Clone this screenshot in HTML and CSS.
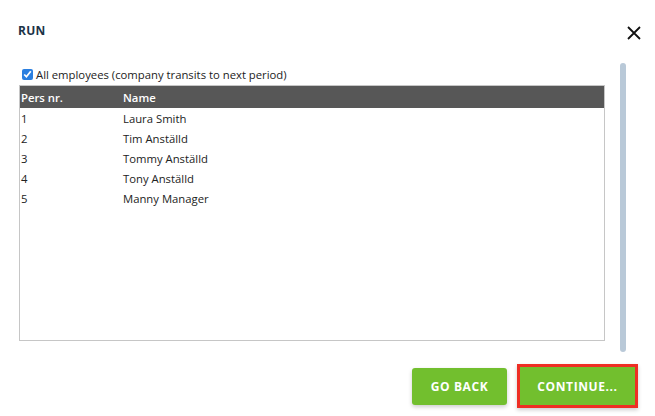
FILE: index.html
```html
<!DOCTYPE html>
<html lang="en">
<head>
    <meta charset="UTF-8">
    <meta name="viewport" content="width=device-width, initial-scale=1.0">
    <title>Run</title>
    <link rel="stylesheet" href="styles.css">
</head>
<body>
    <div class="dialog">
        <div class="dialog-header">
            <h1>RUN</h1>
            <button class="close-button" aria-label="Close">
                <svg width="14" height="14" viewBox="0 0 14 14">
                    <path d="M1 1 L13 13 M13 1 L1 13" stroke="#111" stroke-width="1.8" fill="none"/>
                </svg>
            </button>
        </div>

        <div class="dialog-body">
            <div class="content">
                <label class="check-row">
                    <input type="checkbox" checked>
                    All employees (company transits to next period)
                </label>
                <div class="table-box">
                    <table class="employees">
                        <thead>
                            <tr><th class="col-nr">Pers nr.</th><th>Name</th></tr>
                        </thead>
                        <tbody>
                            <tr><td>1</td><td>Laura Smith</td></tr>
                            <tr><td>2</td><td>Tim Anställd</td></tr>
                            <tr><td>3</td><td>Tommy Anställd</td></tr>
                            <tr><td>4</td><td>Tony Anställd</td></tr>
                            <tr><td>5</td><td>Manny Manager</td></tr>
                        </tbody>
                    </table>
                </div>
            </div>
            <div class="scrollbar"></div>
        </div>

        <div class="dialog-footer">
            <button class="btn">GO BACK</button>
            <button class="btn btn-active">CONTINUE...</button>
        </div>
    </div>
</body>
</html>
```

FILE: styles.css
```css
body {
    font-family: "Open Sans", "Noto Sans", sans-serif;
    margin: 0;
    padding: 0;
    background-color: #fff;
    color: #222;
}
.dialog {
    width: 655px;
    height: 416px;
    box-sizing: border-box;
    display: flex;
    flex-direction: column;
}
.dialog-header {
    display: flex;
    justify-content: space-between;
    align-items: center;
    padding: 20px 14px 0 18px;
    height: 20px;
}
h1 {
    font-size: 12px;
    font-weight: 700;
    color: #1d3347;
    margin: 0;
    letter-spacing: 0.3px;
}
.close-button {
    border: none;
    background: none;
    padding: 0;
    width: 14px;
    height: 14px;
    cursor: pointer;
    margin-top: 6px;
}
.dialog-body {
    display: flex;
    padding: 20px 0 0 19px;
    height: 292px;
}
.content {
    width: 586px;
}
.check-row {
    display: flex;
    align-items: center;
    font-size: 11.3px;
    height: 22px;
    margin-top: 3px;
}
.check-row input {
    width: 11px;
    height: 11px;
    margin: 0 3px 0 3px;
    accent-color: #2a7fe0;
}
.table-box {
    height: 254px;
    border: 1px solid #c6c6c6;
}
.employees {
    width: 100%;
    border-collapse: collapse;
    font-size: 11.3px;
}
.employees th {
    background-color: #575757;
    color: #fff;
    font-weight: 600;
    text-align: left;
    height: 22px;
    padding: 0 0 0 1px;
}
.employees .col-nr {
    width: 101px;
}
.employees td {
    height: 20px;
    padding: 0 0 0 1px;
}
.employees tbody tr:first-child td {
    padding-top: 0;
}
.scrollbar {
    width: 6px;
    height: 289px;
    margin: 3px 0 0 15px;
    border-radius: 3px;
    background-color: #b9c9d8;
}
.dialog-footer {
    display: flex;
    justify-content: flex-end;
    align-items: center;
    gap: 10px;
    padding: 12px 17px 0 0;
}
.btn {
    width: 95px;
    height: 37px;
    border: none;
    border-radius: 3px;
    background-color: #72bf2e;
    color: #fff;
    font-family: inherit;
    font-size: 12px;
    font-weight: 700;
    letter-spacing: 0.6px;
    box-shadow: 0 2px 4px rgba(0, 0, 0, 0.2);
    cursor: pointer;
}
.btn-active {
    width: 121px;
    height: 44px;
    border: 3px solid #ee2e24;
    border-radius: 0;
}
```
